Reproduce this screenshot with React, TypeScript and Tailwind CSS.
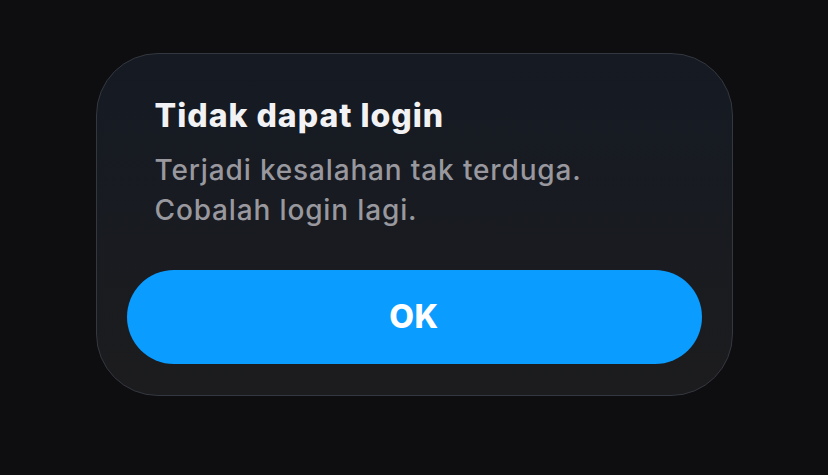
import React from 'react';

const App: React.FC = () => {
  return (
    <div
      className="min-h-screen w-full bg-[#0e0e10] flex justify-center pt-[53px]"
      style={{ fontFamily: 'Inter, "Noto Sans", sans-serif' }}
    >
      <div className="w-[637px] h-[343px] rounded-[62px] border border-[#33373f] bg-gradient-to-b from-[#151a23] to-[#1c1c1e] px-[30px] pt-[43px] flex flex-col">
        <div className="px-[28px]">
          <h2 className="text-[32px] leading-[38px] font-extrabold text-[#f2f2f4] tracking-[1px]">
            Tidak dapat login
          </h2>
          <p className="mt-[15px] text-[28px] leading-[40px] font-medium text-[#98989e] tracking-[0.85px]">
            Terjadi kesalahan tak terduga.
            <br />
            Cobalah login lagi.
          </p>
        </div>
        <button className="mt-[40px] h-[94px] w-full rounded-full bg-[#0a9cff] text-white text-[32px] font-extrabold tracking-[0.5px]">
          OK
        </button>
      </div>
    </div>
  );
};

export default App;
